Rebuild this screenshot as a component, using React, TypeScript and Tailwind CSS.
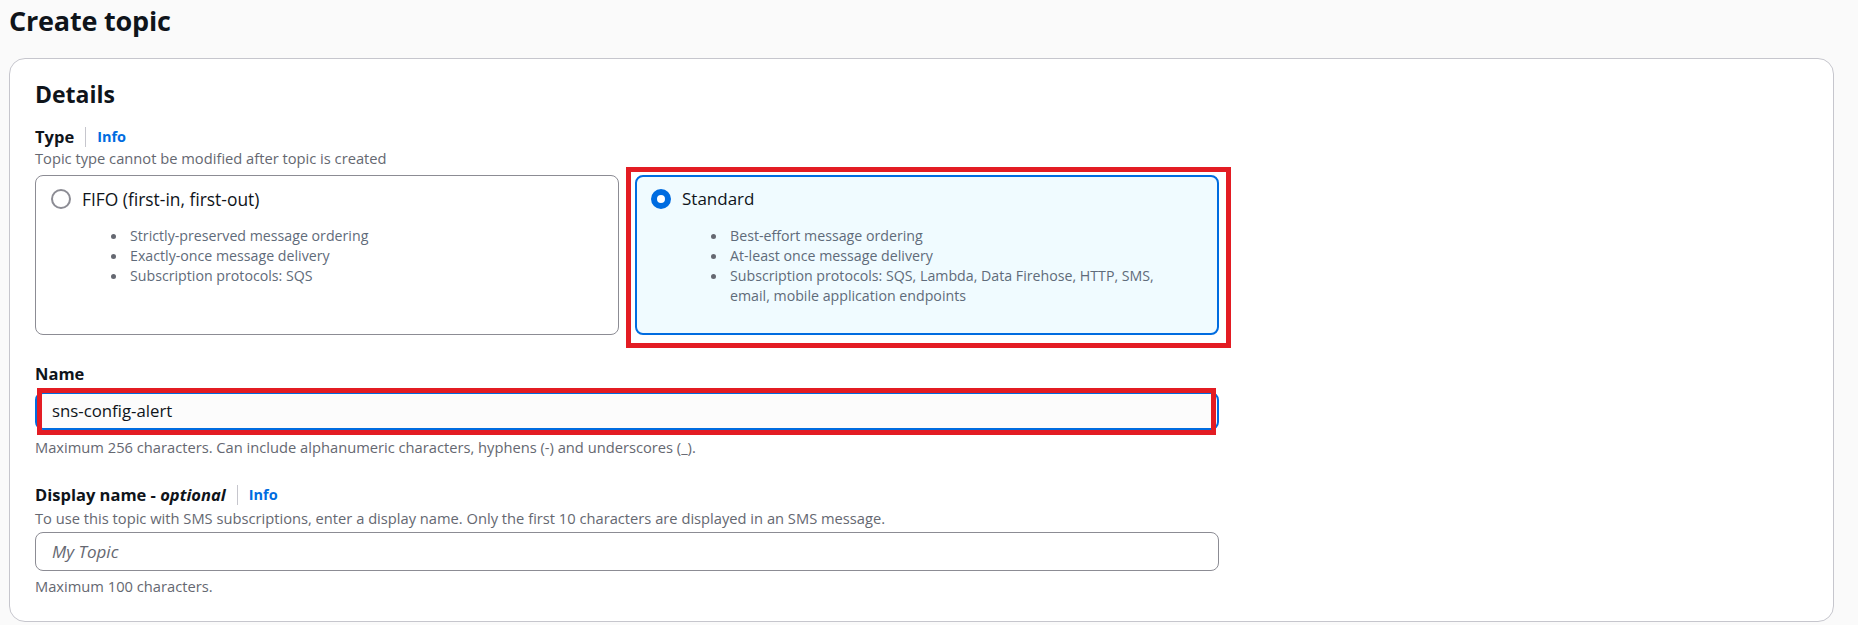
import type { ReactNode } from 'react';

const FONT = "font-['Open_Sans',sans-serif]";

function InfoLabel({ children }: { children: ReactNode }) {
  return (
    <div className="flex items-center text-[16.5px] leading-[22px] font-bold text-[#0f141a]">
      <span>{children}</span>
      <span className="mx-[11px] h-[20px] w-px bg-[#c6c6cd]" />
      <span className="text-[14.5px] font-bold text-[#006ce0]">Info</span>
    </div>
  );
}

function Bullets({ items }: { items: string[] }) {
  return (
    <ul className="mt-[16px] ml-[60px] pr-[24px] text-[14.2px] leading-[20px] text-[#5f6b7a]">
      {items.map((item) => (
        <li key={item} className="flex">
          <span className="mt-[8px] mr-[14px] h-[5px] w-[5px] shrink-0 rounded-full bg-[#656871]" />
          <span>{item}</span>
        </li>
      ))}
    </ul>
  );
}

export default function App() {
  return (
    <div className={`${FONT} min-h-[625px] bg-[#fafafa] pl-[9px] pr-[24px] text-[#0f141a]`}>
      {/* Page header */}
      <h1 className="pt-[3px] text-[27px] leading-[36px] font-bold tracking-[-0.2px]">Create topic</h1>

      {/* Details container */}
      <div className="mt-[19px] rounded-[16px] border border-[#c6c6cd] bg-white px-[25px] pt-[20px] pb-[25px]">
        <h2 className="text-[23px] leading-[30px] font-bold">Details</h2>

        <div className="w-[1184px]">
          {/* Type */}
          <div className="mt-[17px]">
            <InfoLabel>Type</InfoLabel>
            <p className="text-[14.7px] leading-[20px] text-[#656871]">
              Topic type cannot be modified after topic is created
            </p>
          </div>

          <div className="mt-[7px] grid grid-cols-2 gap-[16px]">
            {/* FIFO tile */}
            <div className="h-[160px] rounded-[8px] border border-[#8c8c94] bg-white pt-[12px] pl-[15px] pr-[16px]">
              <div className="flex items-center">
                <span className="h-[20px] w-[20px] rounded-full border-2 border-[#8c8c94] bg-white" />
                <span className="ml-[11px] text-[17.4px] leading-[22px]">FIFO (first-in, first-out)</span>
              </div>
              <Bullets
                items={[
                  'Strictly-preserved message ordering',
                  'Exactly-once message delivery',
                  'Subscription protocols: SQS',
                ]}
              />
            </div>

            {/* Standard tile, selected */}
            <div className="relative">
              <div className="h-[160px] rounded-[8px] border-2 border-[#006ce0] bg-[#f0fbff] pt-[11px] pl-[14px] pr-[16px]">
                <div className="flex items-center">
                  <span className="h-[20px] w-[20px] rounded-full border-[6px] border-[#006ce0] bg-white" />
                  <span className="ml-[11px] text-[17px] leading-[22px]">Standard</span>
                </div>
                <Bullets
                  items={[
                    'Best-effort message ordering',
                    'At-least once message delivery',
                    'Subscription protocols: SQS, Lambda, Data Firehose, HTTP, SMS, email, mobile application endpoints',
                  ]}
                />
              </div>
              {/* annotation */}
              <div className="pointer-events-none absolute -top-[8px] -left-[9px] -right-[12px] -bottom-[13px] border-[5px] border-[#e31c23]" />
            </div>
          </div>

          {/* Name */}
          <div className="mt-[28px] text-[16.5px] leading-[22px] font-bold">Name</div>
          <div className="relative mt-[7px]">
            <div className="flex h-[38px] items-center rounded-[8px] border-2 border-[#006ce0] bg-[#fcfcfc] pl-[15px] text-[16.8px]">
              sns-config-alert
            </div>
            <div className="pointer-events-none absolute -top-[4px] left-[2px] right-[3px] -bottom-[5px] border-[5px] border-[#e31c23]" />
          </div>
          <p className="mt-[7px] text-[14.7px] leading-[20px] text-[#656871]">
            Maximum 256 characters. Can include alphanumeric characters, hyphens (-) and underscores (_).
          </p>

          {/* Display name */}
          <div className="mt-[27px]">
            <InfoLabel>
              Display name - <i>optional</i>
            </InfoLabel>
          </div>
          <p className="mt-[2px] text-[14.7px] leading-[20px] text-[#656871]">
            To use this topic with SMS subscriptions, enter a display name. Only the first 10 characters are displayed in an SMS message.
          </p>
          <div className="mt-[4px] flex h-[39px] items-center rounded-[8px] border border-[#8c8c94] bg-white pl-[16px] text-[17px] italic text-[#656871]">
            My Topic
          </div>
          <p className="mt-[5px] text-[14.7px] leading-[20px] text-[#656871]">Maximum 100 characters.</p>
        </div>
      </div>
    </div>
  );
}
